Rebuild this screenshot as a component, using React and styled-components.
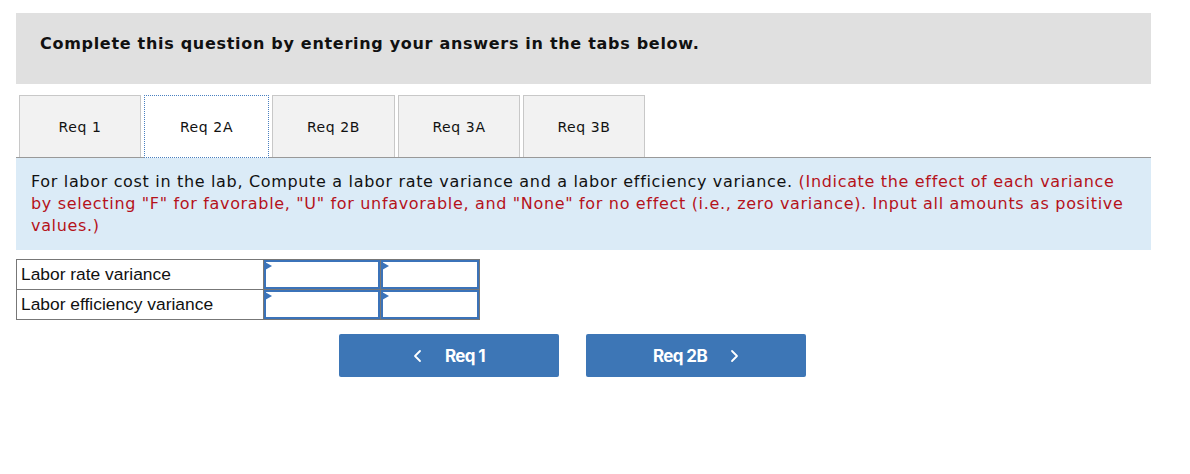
import React from "react";
import styled, { createGlobalStyle } from "styled-components";

const GlobalStyle = createGlobalStyle`
  body {
    margin: 0;
    background: #fff;
    font-family: "DejaVu Sans", Verdana, sans-serif;
  }
`;

const Page = styled.div`
  width: 1190px;
  padding: 13px 39px 0 16px;
  box-sizing: border-box;
`;

const Header = styled.div`
  background: #e0e0e0;
  height: 71px;
  padding: 21px 24px 0;
  box-sizing: border-box;
  font-size: 16px;
  letter-spacing: 0.7px;
  font-weight: bold;
  color: #111;
`;

const TabBar = styled.div`
  display: flex;
  gap: 3px;
  margin-top: 11px;
  padding-left: 3px;
  border-bottom: 1px solid #999;
  height: 62px;
`;

const Tab = styled.div`
  width: ${(p) => p.$w}px;
  box-sizing: border-box;
  display: flex;
  align-items: center;
  justify-content: center;
  font-size: 14px;
  letter-spacing: 0.6px;
  color: #111;
  background: ${(p) => (p.$active ? "#fff" : "#f2f2f2")};
  border: ${(p) => (p.$active ? "1px dotted #4a80c0" : "1px solid #c8c8c8")};
  border-bottom: ${(p) => (p.$active ? "1px dotted #4a80c0" : "none")};
  height: ${(p) => (p.$active ? "63px" : "62px")};
  position: relative;
  z-index: ${(p) => (p.$active ? 1 : 0)};
`;

const Instructions = styled.div`
  background: #dbebf7;
  padding: 13px 20px 13px 15px;
  font-size: 16px;
  letter-spacing: 0.67px;
  line-height: 22px;
  color: #111;
`;

const Red = styled.span`
  color: #b5121b;
`;

const Grid = styled.table`
  margin-top: 9px;
  border-collapse: collapse;
  font-family: "Liberation Sans", Arial, sans-serif;
  font-size: 17.4px;
  color: #111;
`;

const LabelCell = styled.td`
  width: 247px;
  height: 29px;
  padding: 0 0 0 4px;
  box-sizing: border-box;
  border: 1px solid #777;
`;

const InputCell = styled.td`
  width: ${(p) => p.$w}px;
  height: 29px;
  padding: 0;
  border: 1px solid #777;
  position: relative;
`;

const InputBox = styled.div`
  position: absolute;
  inset: 0;
  border: 2px solid #3b73b9;

  &::before {
    content: "";
    position: absolute;
    left: -1px;
    top: 0;
    border-left: 7px solid #3b73b9;
    border-top: 4px solid transparent;
    border-bottom: 4px solid transparent;
  }
`;

const Nav = styled.div`
  display: flex;
  gap: 27px;
  margin-top: 14px;
  padding-left: 323px;
`;

const NavButton = styled.button`
  width: 220px;
  height: 43px;
  border: none;
  border-radius: 2px;
  background: #3d76b6;
  color: #fff;
  font-family: Inter, Roboto, sans-serif;
  font-weight: 700;
  font-size: 17px;
  letter-spacing: -0.6px;
  display: flex;
  align-items: center;
  justify-content: center;
  gap: 23px;
  padding: 0;
`;

const Chevron = ({ dir }) => (
  <svg width="9" height="14" viewBox="0 0 9 14" fill="none">
    <path
      d={dir === "left" ? "M7 2 L2 7 L7 12" : "M2 2 L7 7 L2 12"}
      stroke="#fff"
      strokeWidth="1.8"
      strokeLinecap="round"
      strokeLinejoin="round"
    />
  </svg>
);

const tabs = [
  { label: "Req 1", w: 122 },
  { label: "Req 2A", w: 125, active: true },
  { label: "Req 2B", w: 123 },
  { label: "Req 3A", w: 122 },
  { label: "Req 3B", w: 122 },
];

const rows = ["Labor rate variance", "Labor efficiency variance"];

export default function App() {
  return (
    <Page>
      <GlobalStyle />
      <Header>Complete this question by entering your answers in the tabs below.</Header>
      <TabBar>
        {tabs.map((t) => (
          <Tab key={t.label} $w={t.w} $active={t.active}>
            {t.label}
          </Tab>
        ))}
      </TabBar>
      <Instructions>
        For labor cost in the lab, Compute a labor rate variance and a labor efficiency variance.{" "}
        <Red>
          (Indicate the effect of each variance by selecting "F" for favorable, "U" for unfavorable,
          and "None" for no effect (i.e., zero variance). Input all amounts as positive values.)
        </Red>
      </Instructions>
      <Grid>
        <tbody>
          {rows.map((r) => (
            <tr key={r}>
              <LabelCell>{r}</LabelCell>
              <InputCell $w={116}>
                <InputBox />
              </InputCell>
              <InputCell $w={98}>
                <InputBox />
              </InputCell>
            </tr>
          ))}
        </tbody>
      </Grid>
      <Nav>
        <NavButton>
          <Chevron dir="left" />
          <span>Req 1</span>
        </NavButton>
        <NavButton>
          <span>Req 2B</span>
          <Chevron dir="right" />
        </NavButton>
      </Nav>
    </Page>
  );
}
